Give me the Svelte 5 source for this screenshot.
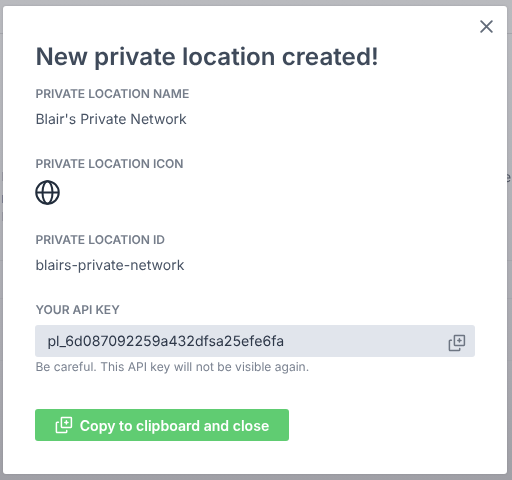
<script>
  const fields = [
    { label: 'Private location name', value: "Blair's Private Network" },
    { label: 'Private location icon', icon: true },
    { label: 'Private location ID', value: 'blairs-private-network' },
  ];
  const apiKey = 'pl_6d087092259a432dfsa25efe6fa';
</script>

{#snippet copyIcon()}
  <svg class="copy" viewBox="0 0 18 18" fill="none" stroke="currentColor" stroke-width="1.5" stroke-linejoin="round" stroke-linecap="round">
    <rect x="6.4" y="1.4" width="10" height="10" rx="0.6" />
    <path d="M3.4 6.3H2.2a.8.8 0 0 0-.8.8v8.7a.8.8 0 0 0 .8.8h8.7a.8.8 0 0 0 .8-.8v-1.2M11.4 4.8v3.2M9.8 6.4h3.2" />
  </svg>
{/snippet}

<div class="backdrop">
  <i class="rule" style="top:33px"></i>
  <i class="rule" style="top:260px"></i>
  <i class="rule" style="top:298px"></i>
  <i class="rule" style="top:360px"></i>
  <i class="rule" style="top:422px"></i>
  <i class="mark" style="top:172px"></i>
  <i class="mark dark" style="top:195px"></i>
  <i class="mark" style="top:212px"></i>
  <span class="behind">e</span>
  <div class="modal">
    <button class="close" aria-label="Close">
      <svg viewBox="0 0 12 12" fill="none" stroke="currentColor" stroke-width="1.7" stroke-linecap="round">
        <path d="M1.1 1.1l9.8 9.8M10.9 1.1l-9.8 9.8" />
      </svg>
    </button>
    <h1>New private location created!</h1>
    {#each fields as f}
      <section class:with-icon={f.icon}>
        <h2>{f.label}</h2>
        {#if f.icon}
          <svg class="globe" viewBox="0 0 26 26" fill="none" stroke="currentColor" stroke-width="2.1">
            <circle cx="13" cy="13" r="11.7" />
            <ellipse cx="13" cy="13" rx="5.2" ry="11.7" />
            <path d="M1.5 13h23" />
          </svg>
        {:else}
          <p>{f.value}</p>
        {/if}
      </section>
    {/each}
    <section class="api">
      <h2>Your API key</h2>
      <div class="key"><span>{apiKey}</span>{@render copyIcon()}</div>
      <small>Be careful. This API key will not be visible again.</small>
    </section>
    <button class="primary">{@render copyIcon()}<span>Copy to clipboard and close</span></button>
  </div>
</div>

<style>
  .backdrop {
    position: relative;
    box-sizing: border-box;
    width: 512px;
    height: 480px;
    padding: 6px 5px 6px 3px;
    overflow: hidden;
    background: linear-gradient(180deg, #b9babe 0%, #b2b3b8 35%, #a9a9af 75%, #a0a0a6 100%);
    font-family: Inter, sans-serif;
    text-rendering: geometricPrecision;
    -webkit-font-smoothing: antialiased;
  }
  .rule { position: absolute; left: 0; width: 512px; height: 1px; background: #a4a5ab; }
  .mark { position: absolute; left: 2px; width: 1px; height: 9px; background: #9697a0; }
  .mark.dark { background: #787b8d; height: 8px; }
  .behind { position: absolute; left: 503px; top: 169px; font-size: 14px; line-height: 18px; color: #4d5360; opacity: 0.95; will-change: opacity; }
  .modal {
    position: relative;
    box-sizing: border-box;
    width: 504px;
    height: 468px;
    padding: 35px 32px 0 32px;
    border-radius: 3px;
    background: #fff;
    box-shadow: 0 0 2px rgba(70, 70, 80, 0.25);
  }
  h1, h2, p { margin: 0; }
  button { border: 0; font-family: inherit; padding: 0; }
  svg { display: block; flex: none; }
  .close { position: absolute; top: 14px; right: 14px; background: none; color: #626b79; }
  .close svg { width: 13px; height: 13px; }
  h1 { font-size: 24.2px; line-height: 32px; font-weight: 600; color: #3f4a5a; white-space: nowrap; padding-left: 0.4px; }
  section { height: 70px; box-sizing: border-box; }
  section.with-icon { height: 76px; }
  h2 { font-size: 12.1px; line-height: 20px; font-weight: 600; letter-spacing: -0.03px; text-transform: uppercase; color: #757d8a; white-space: nowrap; padding: 11px 0 0 0.4px; }
  p { font-size: 14.05px; line-height: 22px; padding: 5px 0 0 0.4px; color: #485364; }
  .globe { width: 25px; height: 25px; margin-top: 6px; color: #222d3c; }
  .api { height: 120px; }
  .key {
    display: flex;
    align-items: center;
    justify-content: space-between;
    box-sizing: border-box;
    width: 439.5px;
    height: 32px;
    margin-top: 5px;
    padding: 0 9px 0 12.4px;
    border-radius: 3px;
    background: #e1e5ec;
    font-size: 14.15px;
    color: #2d3748;
  }
  .key span { padding-bottom: 0; }
  .copy { width: 18px; height: 18px; }
  .key .copy { color: #6d7582; margin-top: 3px; }
  small { display: block; font-size: 12.05px; line-height: 20px; color: #7a8290; white-space: nowrap; padding-left: 0.4px; }
  .primary {
    display: flex;
    align-items: center;
    justify-content: center;
    gap: 7px;
    width: 254px;
    height: 32px;
    border-radius: 3px;
    background: #60cc72;
    color: #fff;
    font-size: 14.1px;
    font-weight: 600;
    white-space: nowrap;
  }
</style>
